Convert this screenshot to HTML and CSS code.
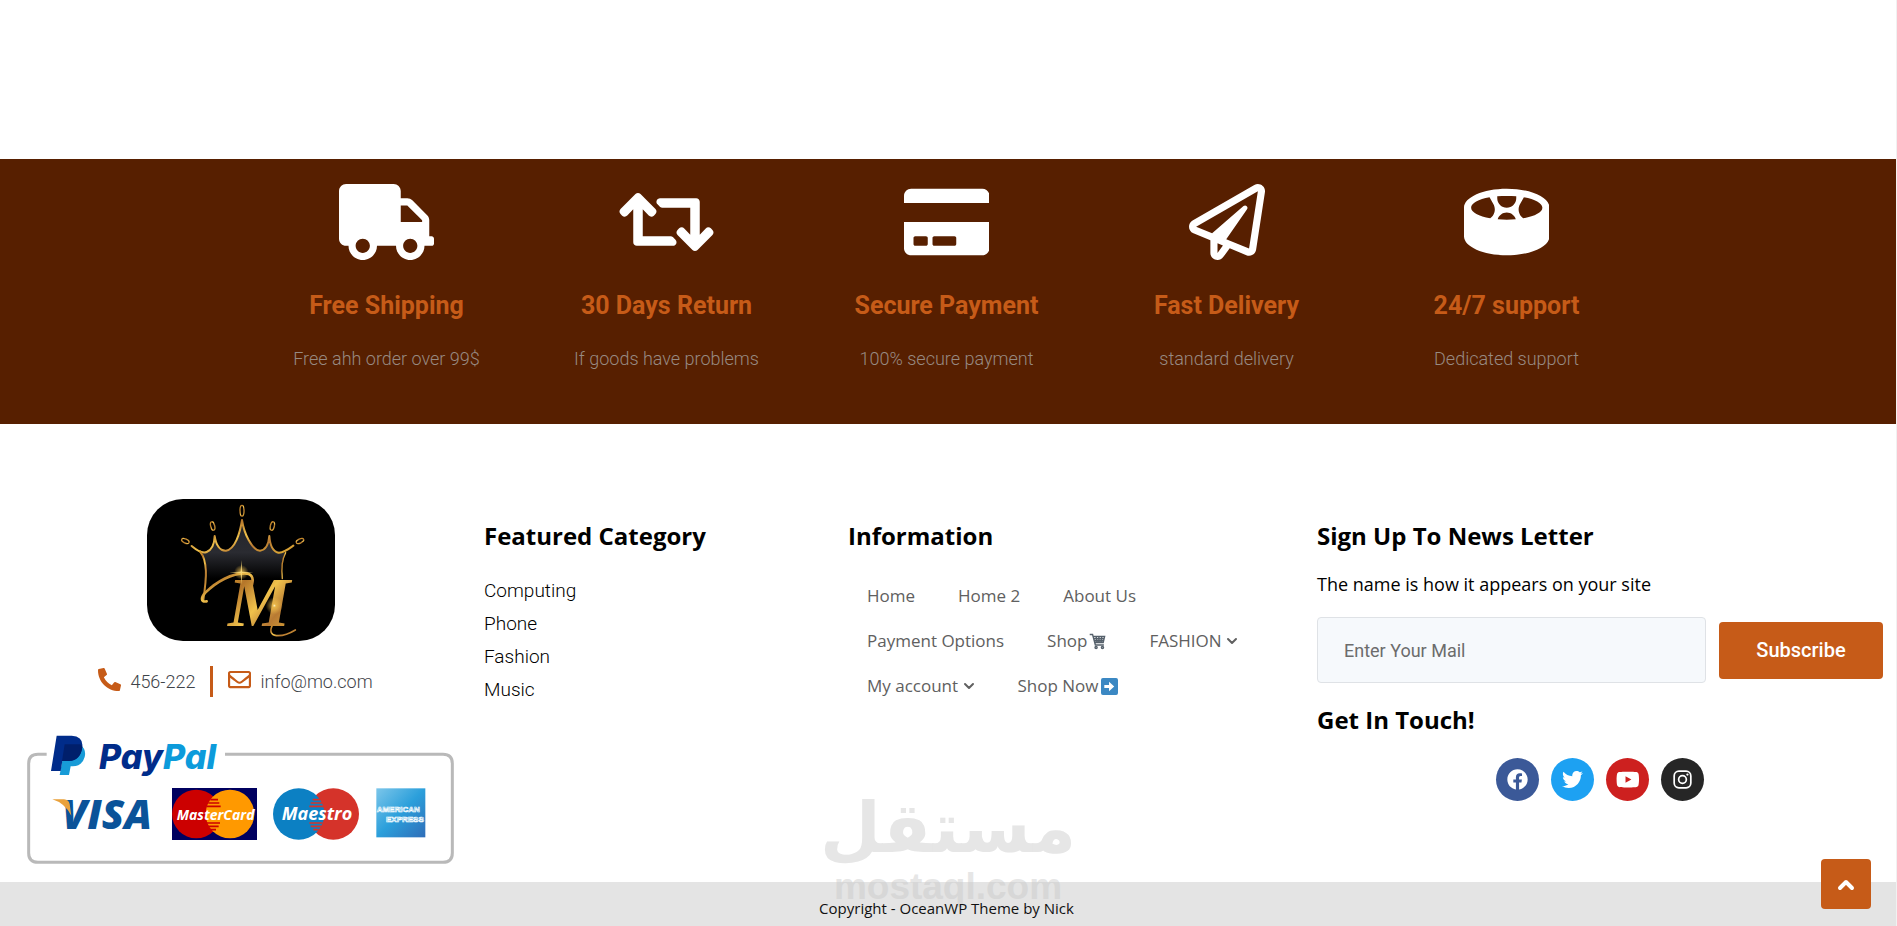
FILE: index.html
```
<!DOCTYPE html>
<html lang="en">
<head>
    <meta charset="UTF-8">
    <meta name="viewport" content="width=device-width, initial-scale=1.0">
    <title>MO Store</title>
    <link rel="stylesheet" href="styles.css">
</head>
<body>
    <!-- Services -->
    <section class="services">
        <div class="services-inner">
            <div class="service">
                <svg class="service-icon" viewBox="0 0 640 512"><path d="M624 352h-16V243.900c0-12.700-5.100-24.900-14.100-33.900L494 110.100c-9-9-21.200-14.100-33.900-14.100H416V48c0-26.500-21.500-48-48-48H48C21.500 0 0 21.500 0 48v320c0 26.500 21.500 48 48 48h16c0 53 43 96 96 96s96-43 96-96h128c0 53 43 96 96 96s96-43 96-96h48c8.800 0 16-7.200 16-16v-32c0-8.800-7.200-16-16-16zM160 464c-26.500 0-48-21.500-48-48s21.500-48 48-48 48 21.500 48 48-21.500 48-48 48zm320 0c-26.500 0-48-21.500-48-48s21.500-48 48-48 48 21.500 48 48-21.500 48-48 48zm80-208H416V144h44.100l99.900 99.900V256z"/></svg>
                <h3>Free Shipping</h3>
                <p>Free ahh order over 99$</p>
            </div>
            <div class="service">
                <svg class="service-icon" viewBox="0 0 640 512"><path d="M629.657 343.598L528.971 444.284c-9.373 9.372-24.568 9.372-33.941 0L394.343 343.598c-9.373-9.373-9.373-24.569 0-33.941l10.823-10.823c9.562-9.562 25.133-9.340 34.419.492L480 342.118V160H292.451a24.005 24.005 0 0 1-16.971-7.029l-16-16C244.361 121.851 255.069 96 276.451 96H520c13.255 0 24 10.745 24 24v222.118l40.416-42.792c9.285-9.831 24.856-10.054 34.419-.492l10.823 10.823c9.372 9.372 9.372 24.569-.001 33.941zm-265.138 15.431A23.999 23.999 0 0 0 347.548 352H160V169.881l40.416 42.792c9.286 9.831 24.856 10.054 34.419.491l10.822-10.822c9.373-9.373 9.373-24.569 0-33.941L144.971 67.716c-9.373-9.373-24.569-9.373-33.941 0L10.343 168.402c-9.373 9.373-9.373 24.569 0 33.941l10.822 10.822c9.562 9.562 25.133 9.340 34.419-.491L96 169.881V392c0 13.255 10.745 24 24 24h243.549c21.382 0 32.090-25.851 16.971-40.971l-16.001-16z"/></svg>
                <h3>30 Days Return</h3>
                <p>If goods have problems</p>
            </div>
            <div class="service">
                <svg class="service-icon" viewBox="0 0 576 512"><path d="M0 432c0 26.500 21.500 48 48 48h480c26.500 0 48-21.500 48-48V256H0v176zm192-68c0-6.600 5.400-12 12-12h136c6.600 0 12 5.400 12 12v40c0 6.600-5.400 12-12 12H204c-6.600 0-12-5.400-12-12v-40zm-128 0c0-6.600 5.400-12 12-12h72c6.600 0 12 5.400 12 12v40c0 6.600-5.400 12-12 12H76c-6.600 0-12-5.400-12-12v-40zM576 80v48H0V80c0-26.500 21.500-48 48-48h480c26.500 0 48 21.500 48 48z"/></svg>
                <h3>Secure Payment</h3>
                <p>100% secure payment</p>
            </div>
            <div class="service">
                <svg class="service-icon" viewBox="0 0 512 512"><path d="M440 6.500L24 246.400c-34.400 19.900-31.100 70.800 5.700 85.900L144 379.600V464c0 46.400 59.200 65.500 86.600 28.600l43.800-59.100 111.900 46.200c5.900 2.400 12.100 3.600 18.300 3.600 8.200 0 16.300-2.100 23.600-6.200 12.800-7.200 21.600-20 23.900-34.500l59.400-387.200c6.100-40.100-36.900-68.800-71.500-48.900zM192 464v-64.600l36.600 15.100L192 464zm212.600-28.700l-153.800-63.500L391 169.500c10.700-15.500-9.500-33.500-23.700-21.200L155.800 332.600 48 288 464 48l-59.400 387.300z"/></svg>
                <h3>Fast Delivery</h3>
                <p>standard delivery</p>
            </div>
            <div class="service">
                <svg class="service-icon" viewBox="0 0 576 512"><path d="M288 32C128.940 32 0 89.310 0 160v192c0 70.690 128.940 128 288 128s288-57.310 288-128V160c0-70.690-128.940-128-288-128zm-82.990 158.360c-4.450 16.610-14.540 30.570-28.310 40.480C100.230 217.460 48 190.780 48 160c0-30.160 50.110-56.390 124.040-70.030l25.600 44.340c9.860 17.090 12.480 36.990 7.370 56.050zM288 240c-21.080 0-41.410-1-60.890-2.700 8.060-26.130 32.150-45.300 60.890-45.300s52.830 19.170 60.890 45.300C329.410 239 309.080 240 288 240zm64-144c0 35.290-28.710 64-64 64s-64-28.710-64-64V82.960c20.400-1.880 41.800-2.960 64-2.960s43.600 1.080 64 2.960V96zm46.930 134.900c-13.810-9.910-23.940-23.900-28.400-40.540-5.110-19.060-2.490-38.960 7.380-56.040l25.650-44.420C477.720 103.500 528 129.790 528 160c0 30.830-52.400 57.540-129.070 70.900z"/></svg>
                <h3>24/7 support</h3>
                <p>Dedicated support</p>
            </div>
        </div>
    </section>

    <!-- Footer widgets -->
    <section class="widgets">
        <div class="widget brand">
            <svg class="logo" viewBox="21 27 564 426" role="img" aria-label="M">
                <defs>
                    <linearGradient id="gold" x1="0" y1="0" x2="1" y2="1">
                        <stop offset="0" stop-color="#d9a02c"/>
                        <stop offset="0.25" stop-color="#b5762a"/>
                        <stop offset="0.5" stop-color="#f0c24c"/>
                        <stop offset="0.7" stop-color="#b87a33"/>
                        <stop offset="1" stop-color="#e3b035"/>
                    </linearGradient>
                    <linearGradient id="velvet" x1="0" y1="0" x2="0" y2="1">
                        <stop offset="0" stop-color="#25262b"/>
                        <stop offset="0.5" stop-color="#2a2b31"/>
                        <stop offset="0.95" stop-color="#000"/>
                    </linearGradient>
                    <radialGradient id="glow">
                        <stop offset="0" stop-color="#fff6c8"/>
                        <stop offset="0.2" stop-color="#f3c34e" stop-opacity="0.7"/>
                        <stop offset="1" stop-color="#f3c34e" stop-opacity="0"/>
                    </radialGradient>
                </defs>
                <rect x="21" y="27" width="564" height="426"/>
                <path fill="url(#velvet)" d="M184 188C215 186 222 165 224 146C228 170 240 184 258 182C285 178 300 140 306 100C312 140 335 180 360 182C378 180 386 160 388 142C392 170 400 186 437 188C424 210 424 240 427 275H204C204 240 198 210 184 188Z"/>
                <g fill="none" stroke="url(#gold)" stroke-width="6" stroke-linecap="round" stroke-linejoin="round">
                    <path d="M155 168C175 185 190 190 200 186C215 180 223 165 224 138C228 165 240 183 258 182C285 178 300 130 306 90C312 130 335 180 360 182C378 180 386 160 388 138C390 165 400 185 415 188C430 190 445 178 460 167"/>
                    <path d="M180 184C204 215 200 260 190 330"/>
                    <path stroke-width="4" d="M437 188C425 210 424 240 427 266"/>
                    <ellipse stroke-width="4" cx="306" cy="62" rx="6" ry="16"/>
                    <ellipse stroke-width="4" cx="218" cy="108" rx="6" ry="13" transform="rotate(-14 218 108)"/>
                    <ellipse stroke-width="4" cx="397" cy="108" rx="6" ry="13" transform="rotate(14 397 108)"/>
                    <ellipse stroke-width="4" cx="136" cy="153" rx="6" ry="12" transform="rotate(-65 136 153)"/>
                    <ellipse stroke-width="4" cx="480" cy="153" rx="6" ry="12" transform="rotate(65 480 153)"/>
                    <path stroke-width="8" d="M200 334C180 338 184 320 196 308C230 274 276 250 314 250C334 250 342 262 336 284"/>
                    <path stroke-width="5" d="M398 404C376 446 426 444 466 420"/>
                </g>
                <text class="logo-letter" x="264" y="408" fill="url(#gold)">M</text>
                <circle cx="304" cy="247" r="22" fill="url(#glow)"/>
                <circle cx="403" cy="347" r="26" fill="url(#glow)"/>
                <path fill="#f7d777" d="M304 210L306 245L340 247L306 249L304 284L302 249L268 247L302 245Z"/>
            </svg>
            <div class="contact">
                <a href="tel:456222">
                    <svg class="contact-icon" viewBox="0 0 512 512"><path d="M497.390 361.800l-112-48a24 24 0 0 0-28 6.900l-49.600 60.600A370.660 370.660 0 0 1 130.600 204.110l60.600-49.600a23.940 23.940 0 0 0 6.900-28l-48-112A24.160 24.160 0 0 0 122.600.610l-104 24A24 24 0 0 0 0 48c0 256.500 207.900 464 464 464a24 24 0 0 0 23.400-18.600l24-104a24.290 24.290 0 0 0-14.010-27.600z"/></svg>
                    456-222
                </a>
                <span class="divider"></span>
                <a href="mailto:info@mo.com">
                    <svg class="contact-icon" viewBox="0 0 512 512"><path d="M464 64H48C21.490 64 0 85.490 0 112v288c0 26.510 21.490 48 48 48h416c26.510 0 48-21.490 48-48V112c0-26.510-21.490-48-48-48zm0 48v40.805c-22.422 18.259-58.168 46.651-134.587 106.490-16.841 13.247-50.201 45.072-73.413 44.701-23.208.375-56.579-31.459-73.413-44.701C106.180 199.465 70.425 171.067 48 152.805V112h416zM48 400V214.398c22.914 18.251 55.409 43.862 104.938 82.646 21.857 17.205 60.134 55.186 103.062 54.955 42.717.231 80.509-37.199 103.053-54.947 49.528-38.783 82.032-64.401 104.947-82.653V400H48z"/></svg>
                    info@mo.com
                </a>
            </div>
            <svg class="payments" viewBox="81 75 1281 390" role="img" aria-label="Payment methods">
                <defs>
                    <linearGradient id="amex" x1="0" y1="0" x2="1" y2="1">
                        <stop offset="0" stop-color="#7cc6ea"/>
                        <stop offset="0.5" stop-color="#2b9fdb"/>
                        <stop offset="1" stop-color="#2f6db8"/>
                    </linearGradient>
                </defs>
                <path fill="none" stroke="#b9b9b9" stroke-width="9" d="M140 136H114Q86 136 86 164V432Q86 460 114 460H1329Q1357 460 1357 432V164Q1357 136 1329 136H675"/>
                <!-- PayPal -->
                <path fill="#179bd7" d="M196 106H240Q260 122 254 144Q247 171 218 172H212L207 198H179Z"/>
                <path fill="#002c8a" d="M170 80H215Q250 82 247 113Q242 155 206 156H187L182 186H153Z"/>
                <path fill="#001f6b" d="M194 106H240Q247 110 247 114Q242 155 206 156H186Z"/>
                <text class="paypal" x="297" y="180"><tspan fill="#002c8a">Pay</tspan><tspan fill="#0c9bdb">Pal</tspan></text>
                <!-- Visa -->
                <text class="visa" x="186" y="359" fill="#0a5399">VISA</text>
                <path fill="#e9a13b" d="M157 271H192Q206 272 209 285L214 320Q194 282 157 271Z"/>
                <!-- MasterCard -->
                <rect x="516" y="237" width="255" height="156" fill="#00005f"/>
                <circle cx="589" cy="315" r="73" fill="#cc0000"/>
                <circle cx="690" cy="315" r="73" fill="#ff9900"/>
                <path stroke="#cc0000" stroke-width="5" d="M631 272H654M625 282H658M621 292H662M621 342H660M625 352H656M633 362H648"/>
                <text class="mastercard" x="530" y="332" fill="#fff">MasterCard</text>
                <!-- Maestro -->
                <circle cx="1000" cy="315" r="77" fill="#d5332a"/>
                <circle cx="896" cy="315" r="77" fill="#0c80c3"/>
                <path stroke="#d5332a" stroke-width="5" d="M938 272H961M932 282H966M928 292H970M928 342H968M932 352H964M940 362H956"/>
                <text class="maestro" x="845" y="333" fill="#fff">Maestro</text>
                <!-- American Express -->
                <rect x="1129" y="238" width="147" height="147" fill="url(#amex)"/>
                <text class="amex" x="1130" y="310">AMERICAN</text>
                <text class="amex" x="1158" y="339">EXPRESS</text>
            </svg>
        </div>

        <div class="widget">
            <h3>Featured Category</h3>
            <ul class="categories">
                <li><a href="#">Computing</a></li>
                <li><a href="#">Phone</a></li>
                <li><a href="#">Fashion</a></li>
                <li><a href="#">Music</a></li>
            </ul>
        </div>

        <div class="widget">
            <h3>Information</h3>
            <nav class="info-menu">
                <a href="#">Home</a>
                <a href="#">Home 2</a>
                <a href="#">About Us</a>
                <a href="#">Payment Options</a>
                <a href="#">Shop<svg class="emoji" viewBox="0 0 48 48"><g fill="none" stroke="#55606b" stroke-width="4"><path d="M2 4h8l8 30h24M12 10h32l-4 17H17M13 16h30M15 22h27M20 10l3 17M28 10v17M36 10l-2 17"/><circle cx="20" cy="41" r="3"/><circle cx="38" cy="41" r="3"/></g></svg></a>
                <a href="#">FASHION <svg class="chevron" viewBox="0 0 12 12"><path d="M2 4l4 4 4-4"/></svg></a>
                <a href="#">My account <svg class="chevron" viewBox="0 0 12 12"><path d="M2 4l4 4 4-4"/></svg></a>
                <a href="#">Shop Now<svg class="emoji" viewBox="0 0 36 36"><rect width="36" height="36" rx="4" fill="#3b88c3"/><path fill="#fff" d="M17 8l11 10-11 10v-7H7v-6h10z"/></svg></a>
            </nav>
        </div>

        <div class="widget">
            <h3>Sign Up To News Letter</h3>
            <p class="newsletter-text">The name is how it appears on your site</p>
            <form class="newsletter">
                <input type="email" placeholder="Enter Your Mail" aria-label="Email">
                <button type="submit">Subscribe</button>
            </form>
            <h3>Get In Touch!</h3>
            <div class="social">
                <a class="facebook" href="#" aria-label="Facebook"><svg viewBox="0 0 512 512"><path d="M504 256C504 119 393 8 256 8S8 119 8 256c0 123.780 90.690 226.380 209.250 245V327.690h-63V256h63v-54.640c0-62.150 37-96.480 93.670-96.480 27.140 0 55.520 4.840 55.520 4.840v61h-31.280c-30.800 0-40.410 19.120-40.410 38.730V256h68.780l-11 71.690h-57.780V501C413.310 482.380 504 379.780 504 256z"/></svg></a>
                <a class="twitter" href="#" aria-label="Twitter"><svg viewBox="0 0 512 512"><path d="M459.370 151.716c.325 4.548.325 9.097.325 13.645 0 138.720-105.583 298.558-298.558 298.558-59.452 0-114.680-17.219-161.137-47.106 8.447.974 16.568 1.299 25.340 1.299 49.055 0 94.213-16.568 130.274-44.832-46.132-.975-84.792-31.188-98.112-72.772 6.498.974 12.995 1.624 19.818 1.624 9.421 0 18.843-1.300 27.614-3.573-48.081-9.747-84.143-51.980-84.143-102.985v-1.299c13.969 7.797 30.214 12.670 47.431 13.319-28.264-18.843-46.781-51.005-46.781-87.391 0-19.492 5.197-37.360 14.294-52.954 51.655 63.675 129.300 105.258 216.365 109.807-1.624-7.797-2.599-15.918-2.599-24.040 0-57.828 46.782-104.934 104.934-104.934 30.213 0 57.502 12.670 76.670 33.137 23.715-4.548 46.456-13.320 66.599-25.340-7.798 24.366-24.366 44.833-46.132 57.827 21.117-2.273 41.584-8.122 60.426-16.243-14.292 20.791-32.161 39.308-52.628 54.253z"/></svg></a>
                <a class="youtube" href="#" aria-label="YouTube"><svg viewBox="0 0 576 512"><path d="M549.655 124.083c-6.281-23.650-24.787-42.276-48.284-48.597C458.781 64 288 64 288 64S117.220 64 74.629 75.486c-23.497 6.322-42.003 24.947-48.284 48.597-11.412 42.867-11.412 132.305-11.412 132.305s0 89.438 11.412 132.305c6.281 23.650 24.787 41.500 48.284 47.821C117.220 448 288 448 288 448s170.780 0 213.371-11.486c23.497-6.321 42.003-24.171 48.284-47.821 11.412-42.867 11.412-132.305 11.412-132.305s0-89.438-11.412-132.305zm-317.510 213.508V175.185l142.739 81.205-142.739 81.201z"/></svg></a>
                <a class="instagram" href="#" aria-label="Instagram"><svg viewBox="0 0 512 512"><g fill="none" stroke="#fff" stroke-width="42"><rect x="53" y="53" width="406" height="406" rx="115"/><circle cx="256" cy="256" r="94"/></g><circle cx="376" cy="136" r="28"/></svg></a>
            </div>
        </div>
    </section>

    <!-- Copyright bar -->
    <footer class="copyright">
        <div class="watermark">
            <span class="watermark-ar" lang="ar">مستقل</span>
            <span class="watermark-en">mostaql.com</span>
        </div>
        <p>Copyright - OceanWP Theme by Nick</p>
    </footer>

    <a class="scroll-top" href="#" aria-label="Back to top"><svg viewBox="0 0 12 12"><path d="M3 8l3-3 3 3"/></svg></a>
</body>
</html>
```
FILE: styles.css
```
* {
    box-sizing: border-box;
}
body {
    margin: 0;
    padding-top: 159px;
    min-height: 100vh;
    display: flex;
    flex-direction: column;
    font-family: Roboto, sans-serif;
    background-color: #fff;
    border-right: 1px solid #f1f1f1;
}
h3, p, ul {
    margin: 0;
    padding: 0;
}
a {
    color: inherit;
    text-decoration: none;
}

/* Services */
.services {
    background-color: #571f00;
    padding: 25px 3px 50px 0;
}
.services-inner {
    max-width: 1400px;
    margin: 0 auto;
    display: grid;
    grid-template-columns: repeat(5, 1fr);
    text-align: center;
}
.service-icon {
    display: block;
    height: 76px;
    margin: 0 auto 31px;
    fill: #fff;
}
.service h3 {
    font-size: 25px;
    font-weight: 700;
    line-height: 30px;
    color: #c65b18;
    margin-bottom: 23px;
}
.service p {
    font-size: 18px;
    font-weight: 300;
    line-height: 30px;
    color: #978a82;
}

/* Footer widgets */
.widgets {
    display: grid;
    grid-template-columns: 474fr 364fr 469fr 586fr;
    padding: 75px 3px 17px 0;
}
.widget {
    padding: 22px 10px 0;
}
.widget h3 {
    font-family: "Open Sans", sans-serif;
    font-size: 24px;
    font-weight: 700;
    line-height: 30px;
    color: #000;
}
.brand {
    padding: 0 20px 0 27px;
    display: flex;
    flex-direction: column;
    align-items: center;
}
.logo {
    width: 188px;
    height: 142px;
    border-radius: 36px;
}
.logo-letter {
    font-family: "Liberation Serif", serif;
    font-size: 210px;
    font-style: italic;
    font-weight: 700;
}
.contact {
    display: flex;
    align-items: center;
    gap: 15px;
    height: 32px;
    margin: 24px 10px 37px 0;
    font-size: 18px;
    font-weight: 300;
    color: #3f444a;
}
.contact a {
    display: flex;
    align-items: center;
    gap: 9px;
}
.contact-icon {
    width: 23px;
    height: 23px;
    margin-bottom: 4px;
    fill: #c65b18;
}
.divider {
    width: 3px;
    height: 31px;
    background-color: #c65b18;
}
.payments {
    width: 100%;
    max-width: 427px;
}
.paypal {
    font-family: Inter, sans-serif;
    font-size: 102px;
    font-style: italic;
    font-weight: 800;
}
.visa, .mastercard, .maestro {
    font-family: "Open Sans", sans-serif;
    font-style: italic;
    font-weight: 700;
}
.visa {
    font-size: 123px;
    font-weight: 800;
}
.mastercard {
    font-size: 42px;
}
.maestro {
    font-size: 54px;
}
.amex {
    font-family: "Liberation Sans", sans-serif;
    font-size: 24px;
    font-weight: 700;
    fill: #2b9fdb;
    stroke: #fff;
    stroke-width: 2px;
}
.categories {
    list-style: none;
    margin-top: 23px;
    font-size: 19px;
    font-weight: 300;
    line-height: 33px;
    color: #000;
}
.info-menu {
    display: flex;
    flex-wrap: wrap;
    column-gap: 43px;
    margin-top: 22px;
    padding-left: 19px;
    font-family: "Open Sans", sans-serif;
    font-size: 17px;
    line-height: 45px;
    color: #606060;
}
.emoji {
    width: 17px;
    height: 17px;
    margin-left: 2px;
    vertical-align: -3px;
}
.chevron {
    width: 12px;
    height: 12px;
}
.chevron path, .scroll-top path {
    fill: none;
    stroke: currentColor;
    stroke-width: 2;
    stroke-linecap: round;
    stroke-linejoin: round;
}
.newsletter-text {
    margin: 21px 0;
    font-family: "Open Sans", sans-serif;
    font-size: 18px;
    line-height: 24px;
    color: #000;
}
.newsletter {
    display: flex;
    align-items: center;
    gap: 13px;
    margin-bottom: 22px;
}
.newsletter input {
    flex: 1;
    min-width: 0;
    height: 66px;
    padding: 0 26px;
    font-family: Roboto, sans-serif;
    font-size: 18px;
    background-color: #f6f9fc;
    border: 1px solid #dfe2e6;
    border-radius: 4px;
}
.newsletter input::placeholder {
    color: #6c6c6c;
}
.newsletter button {
    width: 164px;
    height: 57px;
    font-family: Roboto, sans-serif;
    font-size: 20px;
    font-weight: 500;
    color: #fff;
    background-color: #c65b18;
    border: none;
    border-radius: 4px;
    cursor: pointer;
}
.social {
    display: flex;
    justify-content: center;
    gap: 12px;
    margin-top: 23px;
}
.social a {
    width: 43px;
    height: 43px;
    display: flex;
    align-items: center;
    justify-content: center;
    border-radius: 50%;
}
.social svg {
    height: 21px;
    fill: #fff;
}
.facebook {
    background-color: #3b5998;
}
.twitter {
    background-color: #1da1f2;
}
.youtube {
    background-color: #cd201f;
}
.instagram {
    background-color: #262626;
}

/* Copyright bar */
.copyright {
    position: relative;
    margin-top: auto;
    padding: 14px 3px 6px 0;
    background-color: #e4e4e4;
    text-align: center;
    font-family: "Open Sans", sans-serif;
    font-size: 15px;
    line-height: 24px;
    color: #111;
}
.copyright p {
    position: relative;
}
.watermark {
    position: absolute;
    left: 0;
    right: 0;
    bottom: 20px;
    display: flex;
    flex-direction: column;
    align-items: center;
    color: #c8c8c8;
    opacity: 0.45;
    font-weight: 700;
}
.watermark-ar {
    font-family: "DejaVu Sans", sans-serif;
    font-size: 70px;
    line-height: 80px;
}
.watermark-en {
    font-family: "Liberation Sans", sans-serif;
    font-size: 37px;
    line-height: 38px;
}
.scroll-top {
    position: fixed;
    right: 26px;
    bottom: 17px;
    width: 50px;
    height: 50px;
    display: flex;
    align-items: center;
    justify-content: center;
    color: #fff;
    background-color: #c65b18;
    border-radius: 4px;
}
.scroll-top svg {
    width: 24px;
    height: 24px;
}
```
